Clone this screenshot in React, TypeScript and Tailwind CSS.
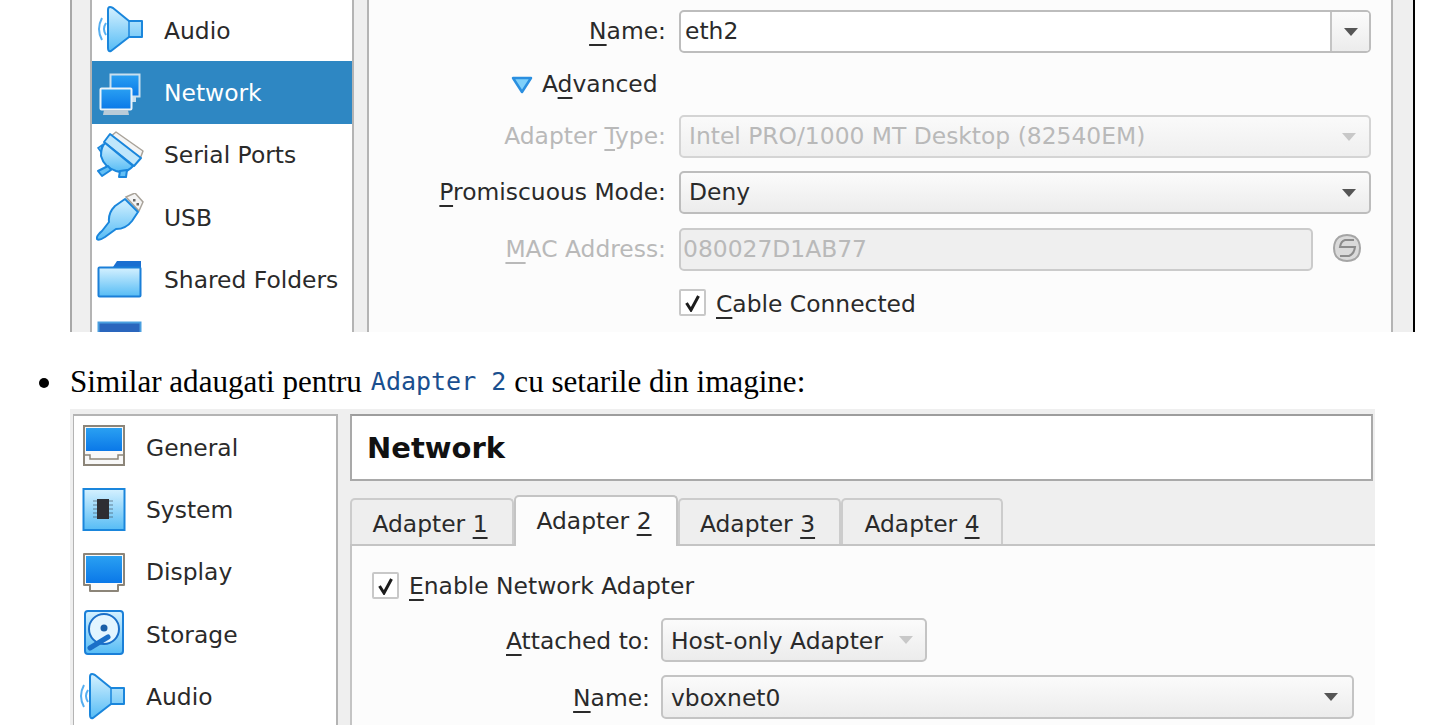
const sans = { fontFamily: '"DejaVu Sans", sans-serif' };

function Gradients() {
  return (
    <svg className="w-0 h-0 block" aria-hidden="true">
      <defs>
        <linearGradient id="light" x1="0" y1="0" x2="0" y2="1">
          <stop offset="0" stopColor="#d5f1ff" />
          <stop offset="1" stopColor="#56bcf5" />
        </linearGradient>
        <linearGradient id="screen" x1="0" y1="0" x2="0" y2="1">
          <stop offset="0" stopColor="#2aa0f2" />
          <stop offset="1" stopColor="#0a78e8" />
        </linearGradient>
      </defs>
    </svg>
  );
}

function AudioIcon() {
  return (
    <svg width="48" height="48" viewBox="0 0 48 48">
      <path d="M14 1 Q12 1 12 4 V42 Q12 46 15 45 L33 31 H46 V15 H33 L17 2 Q15 1 14 1 Z" fill="url(#light)" stroke="#1a86dc" strokeWidth="2" strokeLinejoin="round" />
      <path d="M33 15 V31" stroke="#1a86dc" strokeWidth="1.5" />
      <path d="M6 12 Q0 23 6 34" fill="none" stroke="#55aef0" strokeWidth="2" />
      <path d="M10 17 Q6 23 10 29" fill="none" stroke="#55aef0" strokeWidth="2" />
    </svg>
  );
}

function NetworkIcon() {
  return (
    <svg width="48" height="48" viewBox="0 0 48 48">
      <rect x="14.5" y="5.5" width="29" height="22" fill="url(#screen)" stroke="#c9dfee" strokeWidth="2" />
      <path d="M36 28 V33 H40 V28 Z" fill="#c9dfee" />
      <rect x="4.5" y="19.5" width="31" height="21" rx="1" fill="url(#screen)" stroke="#eaf3f9" strokeWidth="2" />
      <path d="M8 41 H32 L33 46 H7 Z" fill="#b9cbd8" />
    </svg>
  );
}

function SerialIcon() {
  return (
    <svg width="48" height="48" viewBox="0 0 48 48">
      <path d="M20 1 L47 20 L44 28 L14 6 Z" fill="#f4f4f4" stroke="#a9a39a" strokeWidth="1.5" strokeLinejoin="round" />
      <path d="M14 3 L8 11 L38 35 L45 27 Z" fill="#bfe6fb" stroke="#1a86dc" strokeWidth="2" strokeLinejoin="round" />
      <path d="M9 12 L37 35 Q30 43 20 40 Q8 36 5 25 Q5 16 9 12 Z" fill="url(#light)" stroke="#1a86dc" strokeWidth="2" strokeLinejoin="round" />
      <path d="M12 35 L2 40 L6 45 L15 39 Z" fill="#63bff5" stroke="#1a86dc" strokeWidth="2" strokeLinejoin="round" />
      <path d="M24 40 L23 46 L30 46 L31 39 Z" fill="#63bff5" stroke="#1a86dc" strokeWidth="2" strokeLinejoin="round" />
      <path d="M6 14 L2 17 L5 21 Z" fill="#63bff5" stroke="#1a86dc" strokeWidth="1.5" />
    </svg>
  );
}

function UsbIcon() {
  return (
    <svg width="48" height="48" viewBox="0 0 48 48">
      <path d="M30 4 L39 0 L47 9 L43 18 Z" fill="#f4f4f4" stroke="#a9a39a" strokeWidth="1.5" />
      <rect x="37" y="6" width="2.5" height="2.5" fill="#666" />
      <rect x="40.5" y="10" width="2.5" height="2.5" fill="#666" />
      <path d="M29 6 L42 19 L36 28 Q30 36 20 36 L9 44 Q3 48 1 46 Q0 43 6 38 L13 29 Q12 20 19 13 Z" fill="url(#light)" stroke="#1a86dc" strokeWidth="2" strokeLinejoin="round" />
    </svg>
  );
}

function FolderIcon() {
  return (
    <svg width="48" height="48" viewBox="0 0 48 48">
      <path d="M17 11 L21 5 H45 V14 H17 Z" fill="#1a6fd0" />
      <rect x="2.5" y="11.5" width="42" height="29" rx="1" fill="url(#light)" stroke="#1a7fd8" strokeWidth="2" />
    </svg>
  );
}

function InterfaceIcon() {
  return (
    <svg width="48" height="48" viewBox="0 0 48 48">
      <rect x="2.5" y="4.5" width="42" height="32" fill="#2a66bd" stroke="#4a9fe0" strokeWidth="2" />
    </svg>
  );
}

function GeneralIcon() {
  return (
    <svg width="48" height="48" viewBox="0 0 48 48">
      <path d="M6 3 H46 V42 H6 Z" fill="#f8f8f8" stroke="#8c8579" strokeWidth="2" />
      <rect x="8" y="5" width="36" height="23" fill="url(#screen)" />
      <path d="M6 32 H12 V36 H40 V32 H46" fill="none" stroke="#8c8579" strokeWidth="1.5" />
    </svg>
  );
}

function SystemIcon() {
  return (
    <svg width="48" height="48" viewBox="0 0 48 48">
      <rect x="5.5" y="3" width="41" height="41" fill="url(#light)" stroke="#1a86dc" strokeWidth="2" />
      <path d="M15 15 H35 M15 19 H35 M15 23 H35 M15 27 H35 M15 31 H35" stroke="#3a4450" strokeWidth="1.2" opacity="0.6" />
      <rect x="19" y="13" width="12" height="20" fill="#2e2e33" />
    </svg>
  );
}

function DisplayIcon() {
  return (
    <svg width="48" height="48" viewBox="0 0 48 48">
      <path d="M6 6 H46 V37 H40 V43 H12 V37 H6 Z" fill="#fafafa" stroke="#8c8579" strokeWidth="2" strokeLinejoin="round" />
      <rect x="8" y="8" width="36" height="27" fill="url(#screen)" />
    </svg>
  );
}

function StorageIcon() {
  return (
    <svg width="48" height="48" viewBox="0 0 48 48">
      <rect x="7" y="1" width="38" height="43" rx="3" fill="url(#light)" stroke="#1a7fd8" strokeWidth="2" />
      <circle cx="26" cy="19" r="15" fill="#e3f5ff" stroke="#1a6fc8" strokeWidth="2" />
      <circle cx="26" cy="18" r="3.5" fill="#1a5fa8" />
      <path d="M12 38 L30 27" stroke="#1a6fc8" strokeWidth="5" strokeLinecap="round" />
    </svg>
  );
}

function ComboArrow({ muted }: { muted?: boolean }) {
  return (
    <svg width="14" height="8" viewBox="0 0 14 8">
      <path d="M0 0 H14 L7 8 Z" fill={muted ? '#c8c8c8' : '#555555'} />
    </svg>
  );
}

function RefreshIcon() {
  return (
    <svg width="30" height="32" viewBox="0 0 30 32">
      <path d="M7 5 Q15 1 23 5 Q28 9 28 16 Q28 24 23 27 Q15 31 7 27 Q2 24 2 16 Q2 9 7 5 Z" fill="#dadada" stroke="#a5a5a5" strokeWidth="2" />
      <path d="M22 8 H13 Q9 9 8 15 H23 Q22 22 17 24 H8" fill="none" stroke="#8c8c8c" strokeWidth="2" />
    </svg>
  );
}

function Check() {
  return (
    <span className="flex items-center justify-center w-[27px] h-[27px] bg-white border-2 border-[#c8c8c8] rounded-[2px]">
      <svg width="17" height="18" viewBox="0 0 17 18">
        <path d="M2.5 9 L7 16 L14.5 2" fill="none" stroke="#1c1c1c" strokeWidth="3" />
      </svg>
    </span>
  );
}

function Mn({ children }: { children: string }) {
  return <span className="underline decoration-2 underline-offset-[5px]">{children}</span>;
}

function SideRow({ icon, label, selected }: { icon: React.ReactNode; label?: string; selected?: boolean }) {
  return (
    <div className={`flex items-center gap-5 pl-[4px] h-[62.4px] shrink-0 ${selected ? 'bg-[#2e87c3] text-white' : 'text-[#2a2a2a]'}`}>
      {icon}
      {label && <span className="pt-[2px]">{label}</span>}
    </div>
  );
}

function Field({ label, width, gap, muted, children }: { label: React.ReactNode; width: string; gap: string; muted?: boolean; children: React.ReactNode }) {
  return (
    <div className="flex items-center">
      <div className={`${width} ${gap} shrink-0 pt-[1px] text-right whitespace-nowrap ${muted ? 'text-[#b9b9b9]' : 'text-[#2a2a2a]'}`}>{label}</div>
      {children}
    </div>
  );
}

function TopBlock() {
  return (
    <div className="ml-[70px] w-[1345px] h-[332px] shrink-0 flex bg-[#efefef] border-l-2 border-r-2 border-l-[#a8a8a8] border-r-black overflow-hidden text-[23.4px]" style={sans}>
      <div className="ml-[18px] w-[264px] h-[340px] shrink-0 flex flex-col bg-white border-x-2 border-[#b4b4b4] -mt-px">
        <SideRow icon={<AudioIcon />} label="Audio" />
        <SideRow icon={<NetworkIcon />} label="Network" selected />
        <SideRow icon={<SerialIcon />} label="Serial Ports" />
        <SideRow icon={<UsbIcon />} label="USB" />
        <SideRow icon={<FolderIcon />} label="Shared Folders" />
        <SideRow icon={<InterfaceIcon />} />
      </div>
      <div className="ml-[13px] w-[1026px] shrink-0 bg-[#fcfcfc] border-x-2 border-[#b4b4b4] pt-[10px] flex flex-col">
        <Field label={<><Mn>N</Mn>ame:</>} width="w-[297px]" gap="mr-[13px]">
          <div className="w-[692px] h-[43px] flex bg-white border-2 border-[#bdbdbd] rounded-[5px] overflow-hidden">
            <span className="flex-1 pl-[4px] leading-[39px] text-[#2a2a2a]">eth2</span>
            <span className="w-[39px] flex items-center justify-center border-l-2 border-[#c4c4c4] bg-gradient-to-b from-[#fbfbfb] to-[#ececec]"><ComboArrow /></span>
          </div>
        </Field>
        <div className="flex items-center h-[32px] mt-[16px] pl-[142px] gap-[9px] text-[#2a2a2a]">
          <svg width="22" height="18" viewBox="0 0 22 18">
            <path d="M2 2 H20 L11 16 Z" fill="#7fd0fa" stroke="#2a8fe0" strokeWidth="2.5" strokeLinejoin="round" />
          </svg>
          <span>A<Mn>d</Mn>vanced</span>
        </div>
        <div className="mt-[14px]">
          <Field muted label={<>Adapter <Mn>T</Mn>ype:</>} width="w-[297px]" gap="mr-[13px]">
            <div className="w-[692px] h-[43px] flex items-center justify-between pl-[8px] pr-[13px] border-2 border-[#d4d4d4] rounded-[5px] bg-gradient-to-b from-[#fafafa] to-[#efefef] text-[#b9b9b9]">
              <span>Intel PRO/1000 MT Desktop (82540EM)</span>
              <ComboArrow muted />
            </div>
          </Field>
        </div>
        <div className="mt-[13px]">
          <Field label={<><Mn>P</Mn>romiscuous Mode:</>} width="w-[297px]" gap="mr-[13px]">
            <div className="w-[692px] h-[43px] flex items-center justify-between pl-[8px] pr-[13px] border-2 border-[#bdbdbd] rounded-[5px] bg-gradient-to-b from-[#fbfbfb] to-[#ececec] text-[#2a2a2a]">
              <span className="pt-[1px]">Deny</span>
              <ComboArrow />
            </div>
          </Field>
        </div>
        <div className="mt-[14px]">
          <Field muted label={<><Mn>M</Mn>AC Address:</>} width="w-[297px]" gap="mr-[13px]">
            <div className="w-[634px] h-[43px] flex items-center pl-[2px] border-2 border-[#cbcbcb] rounded-[5px] bg-[#efefef] text-[#b9b9b9]">080027D1AB77</div>
            <span className="ml-[19px] -mt-[4px]"><RefreshIcon /></span>
          </Field>
        </div>
        <div className="flex items-center h-[27px] gap-[10px] mt-[18px] ml-[310px] text-[#2a2a2a]">
          <Check />
          <span className="pt-[4px]"><Mn>C</Mn>able Connected</span>
        </div>
      </div>
    </div>
  );
}

function Tab({ label, mn, active, width, inset }: { label: string; mn: string; active?: boolean; width: string; inset?: string }) {
  return (
    <div className={`${width} ${inset ?? ''} shrink-0 flex items-center justify-center rounded-t-[5px] border-2 border-b-0 text-[#2a2a2a] ${active ? 'h-[51px] bg-[#fcfcfc] border-[#c4c4c4] -mb-[2px]' : 'h-[46px] bg-[#eeeeee] border-[#cccccc] pt-[6px]'}`}>
      <span>{label} <Mn>{mn}</Mn></span>
    </div>
  );
}

function BottomBlock() {
  return (
    <div className="ml-[70px] w-[1305px] h-[316px] shrink-0 flex bg-[#efefef] pt-[5px] overflow-hidden text-[23.4px]" style={sans}>
      <div className="ml-[3px] w-[265px] h-[330px] shrink-0 flex flex-col bg-white border border-t-2 border-r-2 border-[#b4b4b4] text-[#2a2a2a]">
        <SideRow icon={<GeneralIcon />} label="General" />
        <SideRow icon={<SystemIcon />} label="System" />
        <SideRow icon={<DisplayIcon />} label="Display" />
        <SideRow icon={<StorageIcon />} label="Storage" />
        <SideRow icon={<AudioIcon />} label="Audio" />
      </div>
      <div className="ml-[12px] flex-1 flex flex-col min-w-0">
        <div className="mr-[2px] h-[67px] shrink-0 flex items-center pl-[15px] pt-[2px] bg-white border-2 border-[#a9a9a9] border-t-[#9d9d9d] text-[29px] font-bold text-[#111]">Network</div>
        <div className="flex items-end mt-[15px] h-[48px] shrink-0 relative z-10">
          <Tab label="Adapter" mn="1" width="w-[164px]" inset="pr-[4px]" />
          <Tab label="Adapter" mn="2" width="w-[164px]" inset="pr-[4px]" active />
          <Tab label="Adapter" mn="3" width="w-[163px]" inset="pr-[4px]" />
          <Tab label="Adapter" mn="4" width="w-[162px]" />
        </div>
        <div className="flex-1 bg-[#fcfcfc] border-l-2 border-t-2 border-[#c4c4c4] pt-[26px] flex flex-col">
          <div className="flex items-center h-[27px] gap-[10px] pl-[20px] text-[#2a2a2a]">
            <Check />
            <span className="pt-[3px]"><Mn>E</Mn>nable Network Adapter</span>
          </div>
          <div className="mt-[19px]">
            <Field label={<span className="relative top-[1px]"><Mn>A</Mn>ttached to:</span>} width="w-[298px]" gap="mr-[11px]">
              <div className="w-[266px] h-[44px] flex items-center justify-between pl-[8px] pr-[12px] border-2 border-[#c4c4c4] rounded-[5px] bg-gradient-to-b from-[#fbfbfb] to-[#ececec] text-[#2a2a2a]">
                <span className="pt-[3px]">Host-only Adapter</span>
                <ComboArrow muted />
              </div>
            </Field>
          </div>
          <div className="mt-[13px]">
            <Field label={<span className="relative top-[1px]"><Mn>N</Mn>ame:</span>} width="w-[298px]" gap="mr-[11px]">
              <div className="w-[693px] h-[44px] flex items-center justify-between pl-[8px] pr-[14px] border-2 border-[#c4c4c4] rounded-[5px] bg-gradient-to-b from-[#fbfbfb] to-[#ececec] text-[#2a2a2a]">
                <span className="pt-[3px]">vboxnet0</span>
                <ComboArrow />
              </div>
            </Field>
          </div>
        </div>
      </div>
    </div>
  );
}

export default function App() {
  return (
    <div className="w-[1435px] h-[725px] bg-white overflow-hidden flex flex-col">
      <Gradients />
      <TopBlock />
      <div className="h-[77px] shrink-0 flex items-center pt-[23px] text-[31.1px] text-black" style={{ fontFamily: '"Liberation Serif", serif' }}>
        <span className="ml-[39px] mr-[21px] mt-[2px] w-[10px] h-[10px] rounded-full bg-black shrink-0"></span>
        <span className="whitespace-nowrap">Similar adaugati pentru</span>
        <code className="ml-[9px] text-[25px] text-[#1a4f8f]" style={{ fontFamily: '"DejaVu Sans Mono", monospace' }}>Adapter 2</code>
        <span className="ml-[8px] whitespace-nowrap">cu setarile din imagine:</span>
      </div>
      <BottomBlock />
    </div>
  );
}
